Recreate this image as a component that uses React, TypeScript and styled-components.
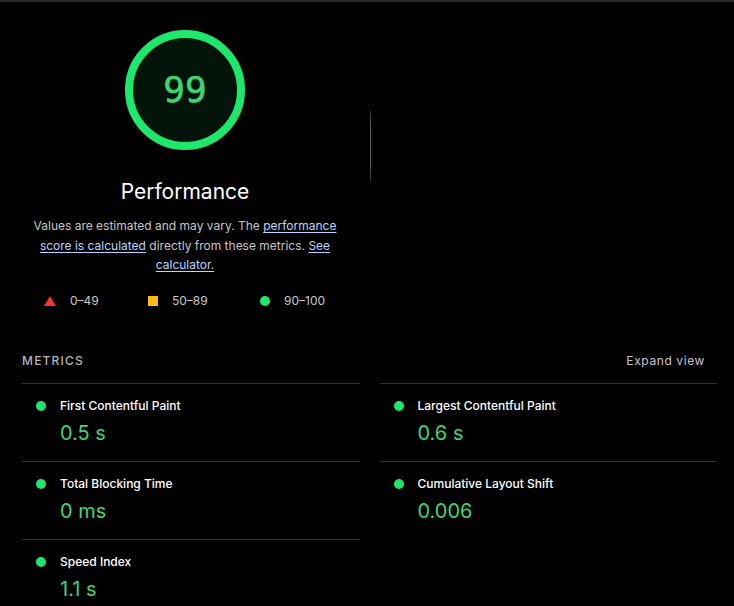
import React from 'react'
import styled, { createGlobalStyle } from 'styled-components'

const GlobalStyle = createGlobalStyle`
  html, body {
    margin: 0;
    padding: 0;
    background: #000;
  }
  body {
    font-family: Inter, "Liberation Sans", Arial, sans-serif;
    color: #e8e8e8;
    -webkit-font-smoothing: antialiased;
  }
`

const PASS = '#1ee86c'
const PASS_TEXT = '#3fd574'
const AVERAGE = '#ffbb1e'
const FAIL = '#f0342e'

const Page = styled.div`
  width: 734px;
  height: 606px;
  overflow: hidden;
  border-top: 2px solid #2a2a2a;
  box-sizing: border-box;
`

const Scores = styled.div`
  display: flex;
  align-items: flex-start;
`

const ScoreColumn = styled.div`
  width: 370px;
  display: flex;
  flex-direction: column;
  align-items: center;
  padding-top: 28px;
`

const Divider = styled.div`
  width: 1px;
  height: 72px;
  margin-top: 108px;
  background: linear-gradient(#2a2a2a, #5a5a5a 20%, #5a5a5a 80%, #2a2a2a);
`

const GaugeWrap = styled.div`
  position: relative;
  width: 120px;
  height: 120px;
`

const GaugeValue = styled.div`
  position: absolute;
  inset: 0;
  display: flex;
  align-items: center;
  justify-content: center;
  font-family: "DejaVu Sans Mono", "Liberation Mono", monospace;
  font-size: 36px;
  color: ${PASS_TEXT};
  -webkit-text-stroke: 0.6px ${PASS_TEXT};
  padding-bottom: 2px;
`

const Title = styled.div`
  margin-top: 28px;
  font-size: 21px;
  line-height: 28px;
  color: #fff;
  font-weight: 400;
`

const Description = styled.p`
  margin: 10px 0 0;
  width: 310px;
  text-align: center;
  font-size: 12px;
  line-height: 19.5px;
  color: #c6c6c6;

  a {
    color: #b8d4ff;
    text-decoration: underline;
    text-underline-offset: 2px;
  }
`

const Legend = styled.div`
  margin-top: 16px;
  display: flex;
  width: 300px;
  padding-left: 18px;
  font-size: 12px;
  line-height: 20px;
  color: #c8c8c8;
`

const LegendItem = styled.div<{ $width: number }>`
  display: flex;
  align-items: center;
  gap: 14px;
  width: ${(p) => p.$width}px;
`

const Square = styled.span`
  width: 10px;
  height: 10px;
  background: ${AVERAGE};
`

const Dot = styled.span<{ $size?: number }>`
  flex: none;
  width: ${(p) => p.$size ?? 10}px;
  height: ${(p) => p.$size ?? 10}px;
  border-radius: 50%;
  background: ${PASS};
`

const Metrics = styled.section`
  margin-top: 39px;
  padding: 0 17px 0 22px;
`

const MetricsHeader = styled.div`
  display: flex;
  justify-content: space-between;
  align-items: center;
  height: 22px;
  font-size: 12px;
  color: #b4b4b4;
`

const HeaderLabel = styled.span`
  letter-spacing: 1.2px;
  font-weight: 500;
`

const ExpandButton = styled.span`
  letter-spacing: 0.6px;
  color: #c8c8c8;
  margin-right: 12px;
`

const MetricGrid = styled.div`
  margin-top: 11px;
  display: grid;
  grid-template-columns: 1fr 1fr;
  column-gap: 20px;
`

const Metric = styled.div`
  border-top: 1px solid #333;
  display: grid;
  grid-template-columns: 38px 1fr;
  grid-template-rows: 22px 32px;
  padding-top: 11px;
  height: 66px;
`

const MetricDot = styled.div`
  display: flex;
  align-items: center;
  padding-left: 14px;
`

const MetricLabel = styled.div`
  font-size: 12px;
  font-weight: 500;
  color: #fff;
  line-height: 22px;
`

const MetricValue = styled.div`
  grid-column: 2;
  font-size: 20px;
  line-height: 32px;
  color: ${PASS_TEXT};
`

const Gauge = ({ score }: { score: number }) => (
  <GaugeWrap>
    <svg width="120" height="120" viewBox="0 0 120 120">
      <circle cx="60" cy="60" r="56" fill="#03150a" stroke={PASS} strokeWidth="8" />
    </svg>
    <GaugeValue>{score}</GaugeValue>
  </GaugeWrap>
)

const metrics = [
  { label: 'First Contentful Paint', value: '0.5 s' },
  { label: 'Largest Contentful Paint', value: '0.6 s' },
  { label: 'Total Blocking Time', value: '0 ms' },
  { label: 'Cumulative Layout Shift', value: '0.006' },
  { label: 'Speed Index', value: '1.1 s' },
]

const App: React.FC = () => {
  return (
    <Page>
      <GlobalStyle />
      <Scores>
        <ScoreColumn>
          <Gauge score={99} />
          <Title>Performance</Title>
          <Description>
            Values are estimated and may vary. The <a href="#score">performance score is calculated</a> directly
            from these metrics. <a href="#calc">See calculator.</a>
          </Description>
          <Legend>
            <LegendItem $width={104}>
              <svg width="12" height="10" viewBox="0 0 12 10">
                <polygon points="6,0 12,10 0,10" fill={FAIL} />
              </svg>
              <span>0–49</span>
            </LegendItem>
            <LegendItem $width={112}>
              <Square />
              <span>50–89</span>
            </LegendItem>
            <LegendItem $width={80}>
              <Dot />
              <span>90–100</span>
            </LegendItem>
          </Legend>
        </ScoreColumn>
        <Divider />
      </Scores>
      <Metrics>
        <MetricsHeader>
          <HeaderLabel>METRICS</HeaderLabel>
          <ExpandButton>Expand view</ExpandButton>
        </MetricsHeader>
        <MetricGrid>
          {metrics.map((m) => (
            <Metric key={m.label}>
              <MetricDot>
                <Dot $size={10} />
              </MetricDot>
              <MetricLabel>{m.label}</MetricLabel>
              <MetricValue>{m.value}</MetricValue>
            </Metric>
          ))}
        </MetricGrid>
      </Metrics>
    </Page>
  )
}

export default App
